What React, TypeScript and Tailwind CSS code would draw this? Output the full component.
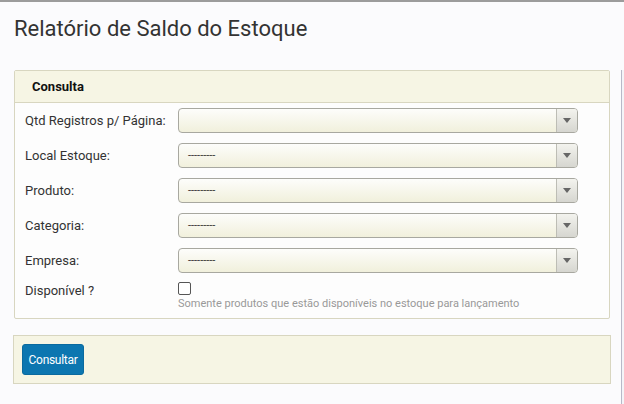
import React from 'react';

const fields = [
  { label: 'Qtd Registros p/ Página:', value: '' },
  { label: 'Local Estoque:', value: '---------' },
  { label: 'Produto:', value: '---------' },
  { label: 'Categoria:', value: '---------' },
  { label: 'Empresa:', value: '---------' },
];

const SelectBox: React.FC<{ value: string }> = ({ value }) => (
  <div className="flex h-[25px] w-[400px] rounded-[4px] border border-[#a8a8a0] bg-gradient-to-b from-[#fdfdfb] to-[#f1f0dc] overflow-hidden">
    <div className="flex-1 flex items-center pl-[9px] text-[11px] leading-none text-[#333]">
      {value}
    </div>
    <div className="w-[21px] flex items-center justify-center border-l border-[#bdbdb5] bg-gradient-to-b from-[#f3f3ee] to-[#d6d6d0]">
      <svg width="8" height="5" viewBox="0 0 8 5">
        <path d="M0 0 L8 0 L4 5 Z" fill="#666" />
      </svg>
    </div>
  </div>
);

export default function App() {
  return (
    <div className="relative w-[624px] h-[404px] bg-[#fbfbfd] border-t-2 border-[#9c9c9c] font-['Roboto',sans-serif] text-[#333] overflow-hidden">
      <div className="absolute right-0 top-[68px] bottom-0 w-[3px] border-l border-[#b8b8c8] bg-[#f4f4f8]" />
      <div className="pl-[14px] pr-[14px]">
        <h1 className="pt-[13px] text-[22px] leading-[28px] text-[#333]">Relatório de Saldo do Estoque</h1>

        <div className="mt-[27px] w-[596px] border border-[#d8d6c0] rounded-[2px] bg-[#fdfdfd]">
          <div className="h-[32px] flex items-center pl-[17px] bg-[#f6f5e4] border-b border-[#d8d6c0] text-[13px] font-bold text-[#111]">
            Consulta
          </div>
          <div className="pl-[10px] pb-[8px]">
            {fields.map((f) => (
              <div key={f.label} className="flex items-center h-[35px]">
                <div className="w-[153px] text-[13px] text-[#333]">{f.label}</div>
                <SelectBox value={f.value} />
              </div>
            ))}
            <div className="flex pt-[2px]">
              <div className="w-[153px] text-[13px] text-[#333] pt-[1px]">Disponível ?</div>
              <div className="flex flex-col">
                <div className="w-[13px] h-[13px] border border-[#555] rounded-[2px] bg-white mt-[2px]" />
                <div className="text-[11px] text-[#999] mt-[2px] leading-[13px]">
                  Somente produtos que estão disponíveis no estoque para lançamento
                </div>
              </div>
            </div>
          </div>
        </div>

        <div className="mt-[16px] -ml-[1px] w-[598px] h-[49px] border border-[#d8d6c0] bg-[#f6f5e4] flex items-center pl-[8px]">
          <button className="h-[31px] w-[62px] rounded-[3px] bg-[#0c76b0] border border-[#0a6a9f] text-white text-[12px] tracking-[-0.3px]">
            Consultar
          </button>
        </div>
      </div>
    </div>
  );
}
